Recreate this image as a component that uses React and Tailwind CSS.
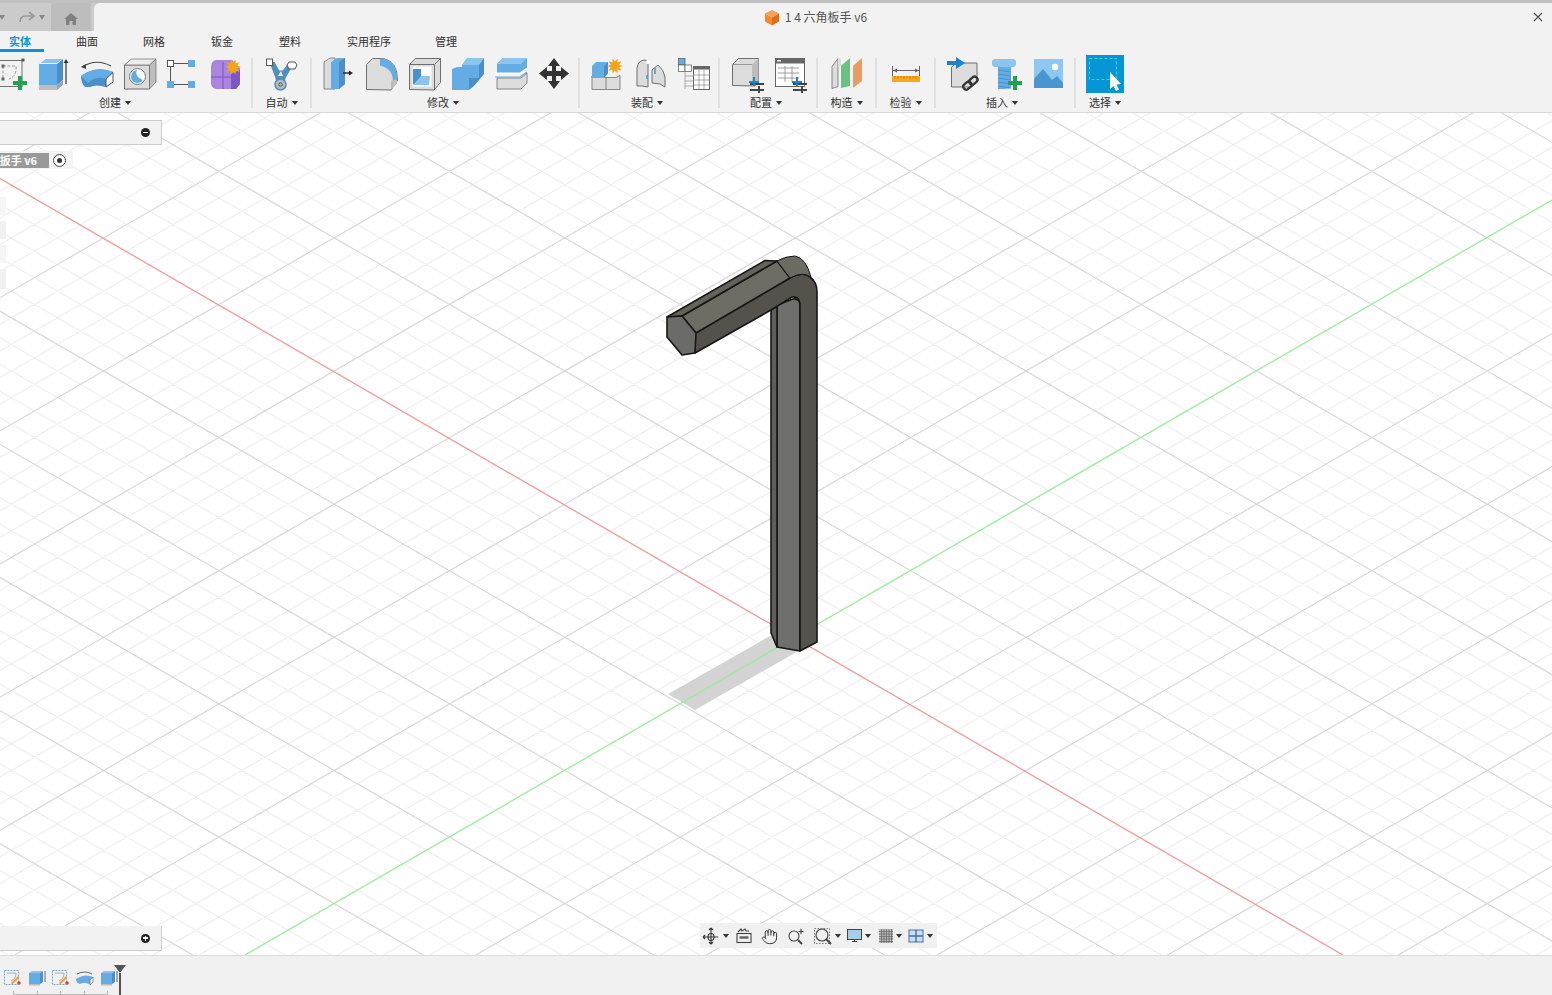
import { Hand } from 'lucide-react'

const cjk = { fontFamily: '"Noto Sans CJK SC", "Liberation Sans", sans-serif' }

// viewport grid, in page coordinates
const ORIGIN = [795.4, 637.3]
const STEP = 23.06
const SLOPE = 0.5774

function gridPath(major) {
  let d = ''
  for (let k = -90; k <= 90; k++) {
    if (k === 0 || (k % 5 === 0) !== major) continue
    const a = k * STEP
    const ox = ORIGIN[0] + a
    const y1 = ORIGIN[1] - a * SLOPE
    const y2 = ORIGIN[1] + a * SLOPE
    d += `M${ox - 3000} ${y1 - 3000 * SLOPE}L${ox + 3000} ${y1 + 3000 * SLOPE}`
    d += `M${ox - 3000} ${y2 + 3000 * SLOPE}L${ox + 3000} ${y2 - 3000 * SLOPE}`
  }
  return d
}

const tabs = [
  { label: '实体', w: 'w-[40px]', active: true },
  { label: '曲面', w: 'w-[94px]' },
  { label: '网格', w: 'w-[40px]' },
  { label: '钣金', w: 'w-[96px]' },
  { label: '塑料', w: 'w-[40px]' },
  { label: '实用程序', w: 'w-[118px]' },
  { label: '管理', w: 'w-[36px]' },
]

const BLUE = '#64ade4'
const LIGHT = '#8cc4ef'
const DARK = '#4a8fc9'
const GRAY = '#dcdcdc'
const MID = '#bdbdbd'
const LINE = '#6f6f6f'

// Each tool is drawn in page coordinates, the viewBox just picks its slice
function Tool({ x, w, children }) {
  return (
    <svg width={w} height={44} viewBox={`${x} 52 ${w} 44`} className="shrink-0 overflow-visible">
      {children}
    </svg>
  )
}

function Star({ cx, cy, r = 8 }) {
  const pts = []
  for (let i = 0; i < 20; i++) {
    const rad = i % 2 ? r * 0.55 : r
    const t = (i * Math.PI) / 10
    pts.push(`${cx + rad * Math.cos(t)},${cy + rad * Math.sin(t)}`)
  }
  return <polygon points={pts.join(' ')} fill="#f5a415" />
}

function Plus({ cx, cy, r = 6, t = 3, fill = '#22a150' }) {
  return (
    <path d={`M${cx - t / 2} ${cy - r}h${t}v${r - t / 2}h${r - t / 2}v${t}h${t / 2 - r}v${r - t / 2}h${-t}v${t / 2 - r}h${t / 2 - r}v${-t}h${r - t / 2}z`} fill={fill} />
  )
}

function ConfigMark({ cx, cy }) {
  return (
    <g>
      <path d={`M${cx - 7} ${cy + 1}h14v2h-14zM${cx - 7} ${cy + 7}h14v2h-14z`} fill="#444" />
      <path d={`M${cx + 1} ${cy + 4}h2v7h-2z`} fill="#444" />
      <path d={`M${cx - 4} ${cy - 5}h2v4h4v2h-4v3h-2v-3h-4v-2h4z`} fill="#1c84cf" />
    </g>
  )
}

function Caret() {
  return <span className="ml-[4px] inline-block h-0 w-0 border-x-[3px] border-t-[4px] border-x-transparent border-t-[#333] align-[2px]" />
}

function Panel({ w, label, children, last, labelClass = '' }) {
  return (
    <div className={`${w} relative flex shrink-0 flex-col items-center ${last ? '' : 'after:absolute after:right-[-1px] after:top-[6px] after:h-[50px] after:w-[2px] after:bg-[#e0e0e0]'}`}>
      <div className="flex h-[44px] w-full">{children}</div>
      <div className={`${labelClass} -mt-[1px] text-[11px] leading-[14px] text-[#333]`}>
        {label}
        <Caret />
      </div>
    </div>
  )
}

function Toolbar() {
  return (
    <div className="flex h-[60px] -ml-[22px]">
      <Panel w="w-[274px]" label="创建">
        <Tool x={-22} w={55}>
          <rect x="-1" y="60.5" width="23" height="26" fill="none" stroke={LINE} />
          <path d="M3 66v12M3 66h13q1 10-7 13" fill="none" stroke="#999" strokeDasharray="3 1.5" />
          <rect x="1.5" y="64.5" width="3" height="3" fill="#666" />
          <rect x="1.5" y="77.5" width="3" height="3" fill="#666" />
          <rect x="21.5" y="58.5" width="3" height="3" fill="#555" />
          <Plus cx={20} cy={83} r={7} t={4} />
        </Tool>
        <Tool x={33} w={42}>
          <path d="M39 64h18v21h-18z" fill={BLUE} />
          <path d="M57 64l6-5v21l-6 5z" fill={DARK} />
          <path d="M39 64l1-1h17l6-4h-17z" fill={LIGHT} />
          <path d="M39 85h18v5h-18z" fill={MID} />
          <path d="M57 85l6-5v5l-6 5z" fill="#a3a3a3" />
          <path d="M66 84v-23" stroke="#333" strokeWidth="1.2" />
          <path d="M63.5 63l2.5-4 2.5 4z" fill="#333" />
        </Tool>
        <Tool x={75} w={44}>
          <path d="M82 67q14-9 29-1" fill="none" stroke="#444" strokeWidth="1.1" />
          <path d="M81 67l5-3v5z" fill="#444" />
          <path d="M81 76Q96 65 113 72L113 82L106 87Q96 84 90 87L85 87Q81 83 81 76Z" fill={DARK} />
          <path d="M81 76Q96 65 113 72L106 79Q96 75 88 83Z" fill={BLUE} />
          <path d="M106 79l7-6.500v9.500l-7 5z" fill="#fff" stroke="#555" />
        </Tool>
        <Tool x={119} w={42}>
          <path d="M124.5 65v24h25v-24z" fill={GRAY} stroke={LINE} />
          <path d="M124.5 65l7-6h24.5l-6.500 6z" fill="#ececec" stroke={LINE} strokeWidth=".7" />
          <path d="M149.500 65l6.500-6v23l-6.500 7z" fill={MID} stroke={LINE} strokeWidth=".7" />
          <circle cx="137.500" cy="76.500" r="8" fill="#fff" stroke="#777" />
          <path d="M131 77a6.500 6.500 0 0 1 6-7q-3 6 6 10a6.500 6.500 0 0 1-12-3z" fill={BLUE} />
        </Tool>
        <Tool x={161} w={43}>
          <path d="M173 63.500h18M170.500 66v15M173 84.500h18" stroke="#555" strokeWidth="1" />
          <rect x="167.500" y="60.500" width="6" height="6" fill="#fff" stroke="#555" />
          <rect x="188" y="60" width="7" height="7" fill={BLUE} />
          <rect x="167" y="81" width="7" height="7" fill={BLUE} />
          <rect x="188" y="81" width="7" height="7" fill={BLUE} />
        </Tool>
        <Tool x={204} w={48}>
          <path d="M216 60h16l8 8v16l-4 5h-20q-5-1-5-6v-16q0-6 5-7z" fill="#a985dd" />
          <path d="M231 74l9-4v14l-4 5h-5z" fill="#7f55c4" />
          <path d="M211 77h26M223 62v27" stroke="#7f55c4" strokeWidth="1" fill="none" />
          <Star cx={233} cy={67} r={8} />
        </Tool>
      </Panel>
      <Panel w="w-[59px]" label="自动">
        <Tool x={252} w={57}>
          <path d="M271 65l5 13 1 7h7l1-7 7-12-3-3-6 8h-4l-5-9z" fill="#4f90bd" stroke="#4f90bd" />
          <path d="M278 76h5l-2-5z" fill="#f2f2f2" />
          <rect x="266.500" y="59" width="6" height="6.500" fill="#fff" stroke="#555" />
          <path d="M289 62h6l2 3-2 4h-6l-2-4z" fill="#fff" stroke="#555" />
          <circle cx="280.500" cy="84.500" r="5.500" fill="#b5bcc2" stroke="#4f90bd" strokeWidth="1.500" />
          <circle cx="280.500" cy="84.500" r="1.800" fill="none" stroke="#555" />
        </Tool>
      </Panel>
      <Panel w="w-[268px]" label="修改" labelClass="pr-[4px]">
        <Tool x={311} w={44}>
          <path d="M324 89v-27l6-4h5v31z" fill={GRAY} stroke={LINE} strokeWidth=".8" />
          <path d="M331 89v-27l6-4h8v26l-6 5z" fill={BLUE} />
          <path d="M339 62l6-4v26l-6 5z" fill={DARK} />
          <path d="M343 73h7" stroke="#222" strokeWidth="1.400" />
          <path d="M349 70.500l4 2.500-4 2.500z" fill="#222" />
        </Tool>
        <Tool x={355} w={44}>
          <path d="M366.500 89.500v-25l6-6h11q14 3 14 22l-6.500 9.500z" fill={GRAY} stroke={LINE} />
          <path d="M380 58.500h3q14 3 14 22l-4 1q0-13-13-16z" fill={BLUE} />
          <path d="M391 89.500v-9l6-1v4z" fill={MID} />
        </Tool>
        <Tool x={399} w={43}>
          <path d="M409.500 89.500v-25l6-6h25v24l-6.500 7.500z" fill={GRAY} stroke={LINE} />
          <path d="M412.500 66.500h19v20h-19z" fill="#fff" />
          <path d="M413 69h8v15h-8z" fill={DARK} />
          <path d="M421 76h9l-1 9h-16z" fill={LIGHT} />
          <path d="M409.500 64.500h25v25M434.500 64.500l6-6" fill="none" stroke={LINE} />
        </Tool>
        <Tool x={442} w={43}>
          <path d="M452 90v-21l5-2h12v23z" fill={BLUE} />
          <path d="M462 78v-13l5-7h17l-5 6v14z" fill={BLUE} />
          <path d="M479 64l5-6v16l-5 6zM469 78h10v2l-5 6-5 4z" fill={DARK} />
          <path d="M462 65h17l5-7h-17z" fill={LIGHT} />
        </Tool>
        <Tool x={485} w={43}>
          <path d="M497 78v11h24l6-6v-10l-6 5z" fill={GRAY} stroke={LINE} strokeWidth=".8" />
          <path d="M497 64l6-6h24v12l-6 3h-24z" fill={BLUE} />
          <path d="M503 58h24l-6 6h-24z" fill={LIGHT} />
          <path d="M495 77h25l7-5" fill="none" stroke={BLUE} strokeWidth="1.200" />
          <path d="M495 73.500h25l7-5" fill="none" stroke="#fff" strokeWidth="2" />
        </Tool>
        <Tool x={528} w={51}>
          <path d="M554 58l6 8h-4v5h5v-4l8 6.500-8 6.500v-4h-5v5h4l-6 8-6-8h4v-5h-5v4l-8-6.500 8-6.500v4h5v-5h-4z" fill="#333" />
        </Tool>
      </Panel>
      <Panel w="w-[140px]" label="装配" labelClass="pr-[4px]">
        <Tool x={579} w={48}>
          <path d="M592 76v13.500h28v-14l-4 2h-24z" fill={GRAY} stroke={LINE} strokeWidth=".8" />
          <path d="M606 78v11" stroke={LINE} strokeWidth=".8" />
          <path d="M592 66l4-4h12v11l-4 5h-12z" fill={BLUE} />
          <path d="M604 66l4-4v11l-4 5z" fill={DARK} />
          <Star cx={615} cy={66} r={8} />
        </Tool>
        <Tool x={627} w={44}>
          <path d="M637 86v-18q1-8 8-8 3 0 3 4v23l-6-1z" fill={GRAY} stroke={LINE} />
          <path d="M652 70l6-5q6 5 7 12v10l-5-3-8-1z" fill={GRAY} stroke={LINE} />
          <path d="M647 75v4M655 68v6" stroke="#2d8fd5" strokeWidth="1.300" />
          <path d="M646 62a2 2 0 1 1 0 .1" fill="#fff" />
        </Tool>
        <Tool x={671} w={48}>
          <rect x="678.500" y="58.500" width="6.500" height="6.500" fill={BLUE} stroke="#555" strokeWidth=".7" />
          <rect x="678.500" y="65" width="6.500" height="6.500" fill="#fff" stroke="#555" strokeWidth=".7" />
          <rect x="685" y="65" width="6.500" height="6.500" fill="#fff" stroke="#555" strokeWidth=".7" />
          <path d="M685 72v17M685 76h8M685 81h8M685 86h8" stroke="#aaa" fill="none" />
          <rect x="693.500" y="66.500" width="16" height="23" fill="#fff" stroke="#666" />
          <path d="M693.500 66.500h16v3h-16z" fill="#666" />
          <path d="M693 75h17M693 80h17M693 85h17M699 70v19M704 70v19" stroke="#888" strokeWidth=".7" />
        </Tool>
      </Panel>
      <Panel w="w-[98px]" label="配置" labelClass="pr-[4px]">
        <Tool x={719} w={46}>
          <path d="M732.500 85.500v-21l6-6h20v24l-4 3.500z" fill={GRAY} stroke={LINE} />
          <path d="M752 64.500l6.500-6v24l-6.500 3z" fill={MID} />
          <path d="M733 64.500h19" stroke="#999" />
          <ConfigMark cx={757} cy={82} />
        </Tool>
        <Tool x={765} w={50}>
          <rect x="775.500" y="58.500" width="29" height="28" fill="#fff" stroke="#666" />
          <path d="M775.500 58.500h29v5h-29z" fill="#666" />
          <rect x="777" y="60" width="4" height="1.500" fill="#fff" />
          <path d="M778 68h21M778 73h21M778 78h21M785 66v16M792 66v16" stroke="#888" strokeWidth=".8" fill="none" />
          <ConfigMark cx={800} cy={82} />
        </Tool>
      </Panel>
      <Panel w="w-[59px]" label="构造">
        <Tool x={817} w={57}>
          <path d="M832 88.500v-22l6-8v28z" fill={GRAY} stroke={LINE} strokeWidth=".8" />
          <path d="M841 88v-22l9-8v28z" fill="#6cc084" />
          <path d="M838 58.500h3l-0 8-3 .5z" fill={GRAY} />
          <path d="M853 88v-22l9-8v23z" fill="#e89a69" />
        </Tool>
      </Panel>
      <Panel w="w-[59px]" label="检验">
        <Tool x={876} w={57}>
          <path d="M892.500 66v10M919.500 66v10" stroke="#666" />
          <path d="M893 70.500h26" stroke="#666" />
          <path d="M893 70.500l4-2v4zM919 70.500l-4-2v4z" fill="#666" />
          <rect x="892" y="76" width="28" height="6" fill="#f5a81c" />
          <path d="M895 76v2M898 76v3M901 76v2M904 76v3M907 76v2M910 76v3M913 76v2M916 76v3" stroke="#b87a10" strokeWidth=".7" />
        </Tool>
      </Panel>
      <Panel w="w-[140px]" label="插入" labelClass="pr-[6px]">
        <Tool x={935} w={46}>
          <path d="M951.500 87v-20l5-4h20.500v17l-5 7z" fill={GRAY} stroke={LINE} />
          <path d="M947 61h9v-4l9 6-9 6v-4h-9z" fill="#1c84cf" />
          <g fill="none" stroke="#333" strokeWidth="2.200">
            <rect x="963" y="83" width="9" height="6" rx="3" transform="rotate(-40 967 86)" />
            <rect x="969" y="78" width="9" height="6" rx="3" transform="rotate(-40 973 81)" />
          </g>
        </Tool>
        <Tool x={981} w={46}>
          <path d="M992 61l2-2h20l2 2v4l-2 2h-20l-2-2z" fill={LIGHT} />
          <path d="M998 67h13v21q-2 1-13 1z" fill={BLUE} />
          <path d="M998 70l13 2M998 74l13 2M998 78l13 2M998 82l13 2M998 86l13 2" stroke={DARK} strokeWidth="1" />
          <Plus cx={1015} cy={83} r={7} t={4} />
        </Tool>
        <Tool x={1027} w={48}>
          <rect x="1034" y="59" width="29" height="29" fill="#8cc8f2" />
          <path d="M1034 79l9-10 9 11 5-4 6 7v5h-29z" fill="#4a95d0" />
          <circle cx="1055" cy="67" r="3.200" fill="#fff" />
        </Tool>
      </Panel>
      <Panel w="w-[60px]" label="选择" last>
        <Tool x={1075} w={58}>
          <rect x="1086" y="55" width="38" height="38" fill="#0696d7" />
          <rect x="1089.500" y="58.500" width="27" height="21" fill="none" stroke="#4fd0c4" strokeDasharray="3 2" />
          <path d="M1110 72v17l3.500-3 2.500 5 3-1.500-2.500-5 4.500-.5z" fill="#fff" />
        </Tool>
      </Panel>
    </div>
  )
}

function Viewport() {
  return (
    <div className="relative min-h-0 flex-1 overflow-hidden bg-white">
      <svg className="absolute inset-0 h-full w-full" viewBox="0 113 1552 842">
        <path d={gridPath(false)} stroke="#eeeeee" strokeWidth="1.100" fill="none" />
        <path d={gridPath(true)} stroke="#d8d8d8" strokeWidth="1.200" fill="none" />
        <path d="M-1 178L1343 955" stroke="#f09a9a" strokeWidth="1.300" />
        <path d="M668 694L695 710L800 650L770 636Z" fill="#d3d3d3" />
        <path d="M245 955L1552 200" stroke="#9aeb9a" strokeWidth="1.300" />

        {/* hex key */}
        <g stroke="#161616" strokeWidth="1.600" strokeLinejoin="round">
          <path d="M777 647L777 305L793 299Q798 298 800 303L800 651Z" fill="#6f706b" />
          <path d="M771 310L777 306L777 647L771 633Z" fill="#5e5e5a" />
          <path d="M695 333L790 278Q803 271 810 277Q817 282 817 292L817 642L800 651L800 306Q800 296 792 297L771 310L695 353Z" fill="#55524c" />
          <path d="M682 316L777 261L790 278L696 333Z" fill="#6e6d63" />
          <path d="M667 317L765 260.500L777 261L682 316Z" fill="#64635a" />
          <path d="M667 317L682 316L696 333L695 353L682 355L667 337Z" fill="#6b6b67" />
          <path d="M777 261Q786 256 795 256Q806 258 811 277Q803 271 790 278Z" fill="#6c6b62" strokeWidth="1" />
        </g>
      </svg>

      {/* browser panel */}
      <div className="absolute left-0 top-[7px] flex h-[25px] w-[162px] items-center justify-end border-b border-r border-t border-[#cccccc] bg-[#f2f2f2] pr-[11px]">
        <span className="flex h-[9px] w-[9px] items-center justify-center rounded-full bg-[#222]">
          <span className="h-[1.500px] w-[5px] bg-white" />
        </span>
      </div>

      <div className="absolute left-0 top-[38px] flex h-[18px] w-[73px] items-center bg-[#f4f4f4]">
        <div className="flex h-[15px] w-[49px] items-center justify-end overflow-hidden whitespace-nowrap bg-[#999] pr-[12px] text-[11px] font-bold text-white" style={cjk}>
          扳手 v6
        </div>
        <span className="ml-[4px] flex h-[13px] w-[13px] items-center justify-center rounded-full border border-[#444] bg-white">
          <span className="h-[5px] w-[5px] rounded-full bg-[#333]" />
        </span>
      </div>

      {/* navigation tabs behind the left edge */}
      <div className="absolute left-0 top-[84px] flex w-[6px] flex-col gap-[6px]">
        <div className="h-[18px] bg-[#f5f5f5]" />
        <div className="h-[18px] bg-[#f1f1f1]" />
        <div className="h-[18px] bg-[#f5f5f5]" />
        <div className="h-[20px] bg-[#f1f1f1]" />
      </div>

      {/* comments panel */}
      <div className="absolute bottom-[4px] left-0 flex h-[25px] w-[162px] items-center justify-end border-b border-r border-[#cccccc] bg-[#f2f2f2] pr-[11px]">
        <span className="relative flex h-[9px] w-[9px] items-center justify-center rounded-full bg-[#222]">
          <span className="absolute h-[1.500px] w-[5px] bg-white" />
          <span className="absolute h-[5px] w-[1.500px] bg-white" />
        </span>
      </div>

      <NavBar />
    </div>
  )
}

function NavCaret({ className }) {
  return <span className={`${className} h-0 w-0 shrink-0 border-x-[3px] border-t-[4px] border-x-transparent border-t-[#333]`} />
}

function NavBar() {
  return (
    <div className="absolute bottom-[7px] left-[700px] flex h-[25px] w-[237px] items-center bg-[#f0f0f0] pl-[2px] pt-[1px] text-[#444]">
      <svg width="18" height="18" viewBox="0 0 18 18" fill="none" stroke="#333" strokeWidth="1.100" className="shrink-0">
        <ellipse cx="9" cy="10" rx="3" ry="3.500" />
        <path d="M9 1v16M9 1l-2 2M9 1l2 2M9 17l-2-2M9 17l2-2M1 10h15M1 10l2-2M1 10l2 2" />
      </svg>
      <NavCaret className="ml-[3px]" />
      <svg width="18" height="18" viewBox="0 0 18 18" fill="none" stroke="#444" strokeWidth="1.100" className="ml-[6px] shrink-0">
        <rect x="2" y="6.500" width="14" height="9" />
        <path d="M4.500 10.500h9" strokeWidth="2.500" stroke="#666" />
        <path d="M3 5l3-3 1 2 3-2 1 2 3 0" />
      </svg>
      <Hand size={17} strokeWidth={1.400} color="#333" className="ml-[8px] shrink-0" />
      <svg width="18" height="18" viewBox="0 0 18 18" fill="none" stroke="#444" strokeWidth="1.100" className="ml-[8.500px] shrink-0">
        <circle cx="7" cy="9" r="5" />
        <path d="M11 13l4 4" strokeWidth="2" />
        <path d="M14 2v5M11.500 4.500h5" />
      </svg>
      <svg width="20" height="20" viewBox="0 0 20 20" fill="none" stroke="#444" strokeWidth="1.100" className="ml-[8px] shrink-0">
        <rect x="1.500" y="2.500" width="15" height="15" strokeDasharray="1.500 1.500" stroke="#777" />
        <circle cx="9" cy="9" r="6" fill="#f0f0f0" />
        <path d="M13 13l5 5" strokeWidth="2" />
      </svg>
      <NavCaret className="ml-[2px]" />
      <svg width="18" height="18" viewBox="0 0 18 18" className="ml-[5px] shrink-0">
        <rect x="1.500" y="2.500" width="14" height="10" fill="#a5cdee" stroke="#444" />
        <path d="M6 14.500h5M8.500 12.500v2" stroke="#444" />
      </svg>
      <NavCaret className="ml-[1px]" />
      <svg width="18" height="18" viewBox="0 0 18 18" className="ml-[6px] shrink-0">
        <rect x="2" y="2" width="14" height="14" fill="#bbb" />
        <path d="M4.500 2v14M7 2v14M9.500 2v14M12 2v14M14.500 2v14M2 4.500h14M2 7h14M2 9.500h14M2 12h14M2 14.500h14" stroke="#666" strokeWidth=".7" />
      </svg>
      <NavCaret className="ml-[1px]" />
      <svg width="18" height="18" viewBox="0 0 18 18" className="ml-[5px] shrink-0">
        <rect x="2" y="3" width="14" height="12" fill="#c7def4" stroke="#4a6f9a" />
        <path d="M9 3v12M2 9h14" stroke="#4a6f9a" strokeWidth="1.400" />
      </svg>
      <NavCaret className="ml-[2px]" />
    </div>
  )
}

function StepSketch() {
  return (
    <svg width="24" height="18" viewBox="0 0 24 18" className="shrink-0">
      <rect x="4.500" y="1.500" width="14" height="14" fill="none" stroke="#7aa5c7" strokeDasharray="2 1" />
      <path d="M7 4h9q0 6-5 8" fill="none" stroke="#999" strokeWidth=".8" />
      <path d="M11 14l7-7 1.500 1.500-7 7z" fill="#e8a33c" />
      <circle cx="19" cy="14" r="1.800" fill="#e0402c" />
    </svg>
  )
}

function StepExtrude() {
  return (
    <svg width="24" height="18" viewBox="0 0 24 18" className="shrink-0">
      <path d="M5 4l3-2h11l-3 2z" fill={LIGHT} />
      <path d="M5 4h11v11h-11z" fill={BLUE} />
      <path d="M16 4l3-2v11l-3 2z" fill={DARK} />
      <path d="M5 15h11v1.500h-11z" fill={MID} />
      <path d="M21 13v-11" stroke="#444" strokeWidth=".8" />
    </svg>
  )
}

function StepRevolve() {
  return (
    <svg width="24" height="18" viewBox="0 0 24 18" className="shrink-0">
      <path d="M5 5q8-4 15 0" fill="none" stroke="#444" strokeWidth=".8" />
      <path d="M4 10q9-6 17-2l-3 3v4q-7-2-10 0-4-1-4-5z" fill={BLUE} />
      <path d="M18 11l3-3v5l-3 3z" fill="#fff" stroke="#666" strokeWidth=".7" />
    </svg>
  )
}

function Timeline() {
  return (
    <div className="relative flex h-[40px] shrink-0 border-t border-[#dddddd] bg-[#f0f0f0]">
      <div className="mt-[13px] flex h-[18px]">
        <StepSketch />
        <StepExtrude />
        <StepSketch />
        <StepRevolve />
        <StepExtrude />
      </div>
      {/* group bracket under the steps */}
      <div className="absolute bottom-0 left-[13px] flex h-[4px] w-[95px] justify-between border-b border-[#bbb]">
        <span className="w-[1px] bg-[#bbb]" />
        <span className="w-[1px] bg-[#bbb]" />
        <span className="w-[1px] bg-[#bbb]" />
        <span className="w-[1px] bg-[#bbb]" />
        <span className="w-[1px] bg-[#bbb]" />
      </div>
      {/* playhead */}
      <div className="absolute bottom-0 left-[114px] top-[9px] flex w-[12px] flex-col items-center">
        <span className="h-0 w-0 border-x-[6px] border-t-[8px] border-x-transparent border-t-[#555]" />
        <span className="w-[2px] flex-1 bg-[#555]" />
      </div>
    </div>
  )
}

function TitleBar() {
  return (
    <div className="flex h-[31px] shrink-0 items-stretch border-t-[3px] border-[#c0c0c0] bg-[#cbcbcb]">
      <div className="flex w-[51px] shrink-0 items-center">
        <span className="h-0 w-0 border-x-[3px] border-t-[5px] border-x-transparent border-t-[#888] -ml-[1px]" />
        <svg width="18" height="14" viewBox="0 0 18 14" fill="none" stroke="#999" strokeWidth="1.700" className="ml-[13px]">
          <path d="M2 12q0-6 6-6h7M11 2l5 4-5 4" />
        </svg>
        <span className="ml-[3px] h-0 w-0 border-x-[3px] border-t-[5px] border-x-transparent border-t-[#888]" />
      </div>
      <div className="flex w-[40px] shrink-0 items-center justify-center rounded-t-[2px] bg-[#bdbdbd]">
        <svg width="16" height="16" viewBox="0 0 16 16" fill="#808080" className="mt-[3px]">
          <path d="M8 2l7 6h-2v6h-3.500v-4h-3v4h-3.500v-6h-2z" />
        </svg>
      </div>
      <div className="relative ml-[3px] flex flex-1 items-center justify-center rounded-tl-[6px] bg-[#f2f2f2] pr-[15px] text-[12px] text-[#555]" style={cjk}>
        <svg width="16" height="17" viewBox="0 0 16 17" className="mr-[5px]">
          <path d="M8 1l7 3.500-7 4-7-4z" fill="#f9a15a" />
          <path d="M1 4.500l7 4v8l-7-4z" fill="#f58a2c" />
          <path d="M15 4.500l-7 4v8l7-4z" fill="#e06e12" />
        </svg>
        1 4 六角板手 v6
        <svg width="10" height="10" viewBox="0 0 10 10" stroke="#555" strokeWidth="1.200" className="absolute right-[9px] top-[9px]">
          <path d="M1 1l8 8M9 1l-8 8" />
        </svg>
      </div>
    </div>
  )
}

export default function App() {
  return (
    <div className="flex h-[995px] w-[1552px] flex-col overflow-hidden bg-white" style={cjk}>
      <TitleBar />

      <div className="shrink-0 border-b border-[#d9d9d9] bg-[#f2f2f2]">
        <div className="flex h-[21px] items-center">
          {tabs.map((tab) => (
            <div key={tab.label} className={`${tab.w} relative h-[21px] text-center text-[11px] leading-[21px] ${tab.active ? 'font-bold text-[#0696d7]' : 'text-[#333]'}`}>
              {tab.label}
              {tab.active && <div className="absolute bottom-0 left-0 h-[3px] w-[44px] bg-[#0696d7]" />}
            </div>
          ))}
        </div>
        <Toolbar />
      </div>

      <Viewport />
      <Timeline />
    </div>
  )
}
